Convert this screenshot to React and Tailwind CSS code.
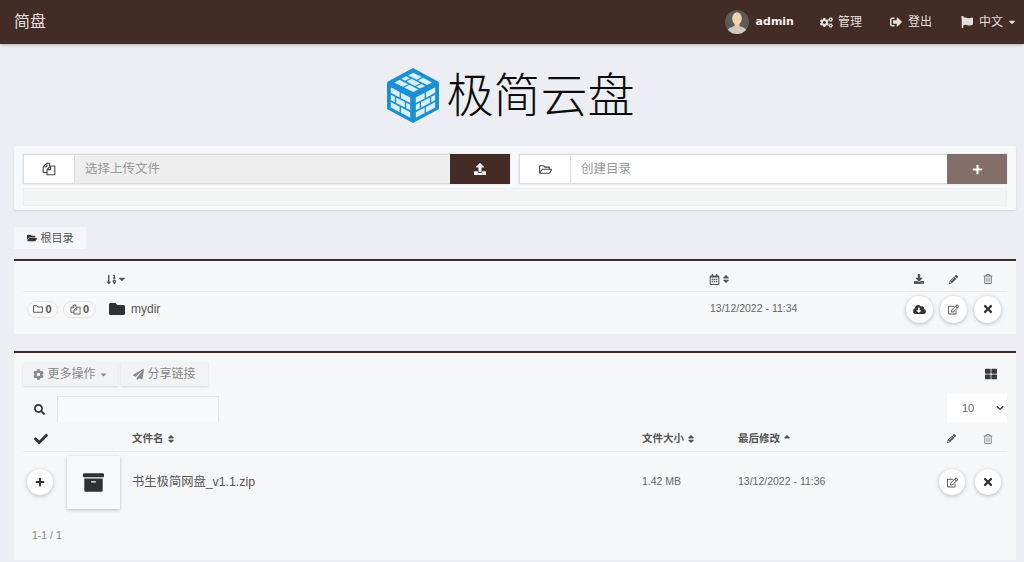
import React from "react";
import { FaCogs, FaSignOutAlt, FaFlag, FaCaretDown, FaUpload, FaRegFolderOpen, FaPlus, FaFolderOpen, FaSortNumericDown, FaRegCalendarAlt, FaSort, FaDownload, FaPencilAlt, FaRegTrashAlt, FaFolder, FaRegFolder, FaCloudDownloadAlt, FaRegEdit, FaTimes, FaCog, FaPaperPlane, FaThLarge, FaSearch, FaCheck, FaArchive, FaChevronDown, FaSortUp } from "react-icons/fa";

const cjk = "font-['Liberation_Sans','Noto_Sans_CJK_SC',sans-serif]";

function FilesIcon({ size = 14 }) {
  return (
    <svg width={size} height={size} viewBox="0 0 14 14" fill="none" stroke="currentColor" strokeWidth="1.1" strokeLinejoin="round" className="shrink-0">
      <path d="M7.5 4 V1.2 H4.8 L1.2 4.8 V10.5 H5" />
      <path d="M4.8 1.2 V4.8 H1.2" />
      <path d="M5 7.6 L8.6 4 H12.8 V12.8 H5 Z" />
      <path d="M8.6 4 V7.6 H5" />
    </svg>
  );
}

function Bricks({ transform }) {
  const rows = [
    [[0.06, 0.05, 0.4, 0.24], [0.52, 0.05, 0.42, 0.24]],
    [[0.06, 0.37, 0.18, 0.24], [0.3, 0.37, 0.4, 0.24], [0.76, 0.37, 0.18, 0.24]],
    [[0.06, 0.69, 0.4, 0.24], [0.52, 0.69, 0.42, 0.24]],
  ];
  return (
    <g transform={transform}>
      {rows.flat().map((r, i) => (
        <rect key={i} x={r[0]} y={r[1]} width={r[2]} height={r[3]} fill="#d9effa" />
      ))}
    </g>
  );
}

function Logo() {
  return (
    <svg width="54" height="57" viewBox="0 0 54 57" className="shrink-0">
      <path d="M27 1 L52 14.5 Q53 15 53 16 L53 41 Q53 42 52 42.5 L27 56 L2 42.5 Q1 42 1 41 L1 16 Q1 15 2 14.5 Z" fill="#1a8fd1" />
      <Bricks transform="matrix(22 11.5 0 23 3.5 18.5)" />
      <Bricks transform="matrix(22 -11.5 0 23 28.5 30)" />
      <Bricks transform="matrix(21.5 11 -21.5 11 27 4.5)" />
    </svg>
  );
}

function Avatar() {
  return (
    <svg width="24" height="24" viewBox="0 0 24 24" className="shrink-0">
      <defs><clipPath id="av"><circle cx="12" cy="12" r="12" /></clipPath></defs>
      <g clipPath="url(#av)">
        <rect width="24" height="24" fill="#5b5a55" />
        <ellipse cx="12" cy="22" rx="10" ry="6" fill="#cfcac2" />
        <rect x="9.5" y="12" width="5" height="6" fill="#e8c9a4" />
        <ellipse cx="12" cy="8.5" rx="4.8" ry="6.2" fill="#f0d3ae" />
      </g>
    </svg>
  );
}

function Circle({ children, className = "" }) {
  return (
    <div className={`flex h-[27px] w-[27px] items-center justify-center rounded-full bg-white text-[#333] shadow-[0_1px_4px_rgba(0,0,0,0.25)] ${className}`}>
      {children}
    </div>
  );
}

function Pill({ icon, w }) {
  return (
    <div className={`flex h-[17px] items-center justify-center gap-[2px] rounded-full border border-[#e3e3e3] bg-[#f8f8f8] text-[11px] font-bold text-[#555] ${w}`}>
      {icon}
      <span>0</span>
    </div>
  );
}

function InputGroup({ width, icon, placeholder, inputClass, btnClass, btnIcon }) {
  return (
    <div className={`flex h-[30px] ${width} shadow-[0_0_1px_rgba(0,0,0,0.25)]`}>
      <div className="flex w-[52px] shrink-0 items-center justify-center border border-[#ddd] bg-white text-[#444]">{icon}</div>
      <input readOnly placeholder={placeholder} className={`min-w-0 flex-1 border-y border-[#ddd] px-[10px] text-[12.5px] outline-none placeholder:text-[#999] ${inputClass}`} />
      <div className={`flex w-[60px] shrink-0 items-center justify-center text-white ${btnClass}`}>{btnIcon}</div>
    </div>
  );
}

export default function App() {
  return (
    <div className={`h-[562px] w-[1024px] overflow-hidden bg-[#eceef3] text-[#555] ${cjk}`}>
      <header className="flex h-[44px] items-center justify-between bg-[#432c26] pl-[14px] pr-[7px] text-[#e4dfdc] shadow-[0_1px_3px_rgba(0,0,0,0.25)]">
        <div className="text-[16px]">简盘</div>
        <nav className="flex items-center text-[12px]">
          <div className="flex items-center gap-[7px]">
            <Avatar />
            <span className="font-['DejaVu_Sans',sans-serif] text-[11px] font-bold text-[#f3f0ee]">admin</span>
          </div>
          <div className="ml-[26px] flex items-center gap-[5px]"><FaCogs className="text-[13px]" />管理</div>
          <div className="ml-[28px] flex items-center gap-[6px]"><FaSignOutAlt className="text-[12px]" />登出</div>
          <div className="ml-[29px] flex items-center gap-[6px]"><FaFlag className="text-[12px]" />中文<FaCaretDown className="-ml-[2px] text-[10px]" /></div>
        </nav>
      </header>

      <div className="flex h-[102px] items-center justify-center gap-[7px] pr-[4px]">
        <Logo />
        <div className="mb-[8px] font-['Noto_Sans_CJK_SC',sans-serif] text-[47px] font-light leading-none text-[#0c0c0c]">极简云盘</div>
      </div>

      <section className="mx-[14px] h-[64px] w-[1002px] rounded-[2px] bg-[#f6f8fa] p-[8px_9px] shadow-[0_1px_2px_rgba(0,0,0,0.1)]">
        <div className="flex gap-[9px]">
          <InputGroup width="w-[487px]" icon={<FilesIcon />} placeholder="选择上传文件" inputClass="bg-[#eeeeee]" btnClass="bg-[#432c26]" btnIcon={<FaUpload className="text-[12px]" />} />
          <InputGroup width="w-[488px]" icon={<FaRegFolderOpen className="text-[13px]" />} placeholder="创建目录" inputClass="bg-white" btnClass="bg-[#836f69]" btnIcon={<FaPlus className="text-[11px]" />} />
        </div>
        <div className="mt-[4px] h-[18px] border border-[#eeeeee] bg-[#f3f4f4]" />
      </section>

      <div className="ml-[14px] mt-[17px] flex h-[22px] w-[72px] items-center justify-center gap-[4px] bg-[#f4f6f9] text-[11px] text-[#555]">
        <FaFolderOpen className="text-[10px] text-[#333]" />根目录
      </div>

      <section className="ml-[14px] mt-[10px] h-[75px] w-[1002px] border-t-2 border-[#3a2b28] bg-[#f5f7f9] px-[9px]">
        <div className="grid h-[31px] grid-cols-[83px_603px_190px_40px_28px_41px] items-center border-b border-[#e8eaed] pt-[6px] text-[#555]">
          <div />
          <div className="flex items-center"><FaSortNumericDown className="text-[11px]" /><FaCaretDown className="text-[10px]" /></div>
          <div className="flex items-center gap-[1px]"><FaRegCalendarAlt className="text-[11px]" /><FaSort className="text-[10px]" /></div>
          <div className="flex justify-center"><FaDownload className="text-[10px]" /></div>
          <div className="flex justify-center"><FaPencilAlt className="text-[9px]" /></div>
          <div className="flex justify-center"><FaRegTrashAlt className="text-[10px] text-[#777]" /></div>
        </div>
        <div className="flex h-[42px] items-center pb-[8px]">
          <div className="ml-[4px] flex gap-[5px]">
            <Pill w="w-[31px]" icon={<FaRegFolder className="text-[10px] font-normal" />} />
            <Pill w="w-[33px]" icon={<FilesIcon size={11} />} />
          </div>
          <FaFolder className="ml-[13px] text-[16px] text-[#2f3136]" />
          <span className="ml-[6px] w-[579px] text-[12px] text-[#555]">mydir</span>
          <span className="w-[196px] text-[10.5px] text-[#666]">13/12/2022 - 11:34</span>
          <div className="flex gap-[7px]">
            <Circle><FaCloudDownloadAlt className="text-[13px]" /></Circle>
            <Circle><FaRegEdit className="text-[11px] text-[#555]" /></Circle>
            <Circle><FaTimes className="text-[12px]" /></Circle>
          </div>
        </div>
      </section>

      <section className="ml-[14px] mt-[17px] h-[209px] w-[1002px] border-t-2 border-[#3f2a26] bg-[#f5f7f9] px-[9px]">
        <div className="mt-[9px] flex h-[24px] items-center justify-between">
          <div className="flex gap-[3px] text-[12px] text-[#888]">
            <div className="flex h-[24px] w-[95px] items-center justify-center gap-[3px] bg-[#f2f3f5] shadow-[0_1px_2px_rgba(0,0,0,0.12)]">
              <FaCog className="text-[11px]" />更多操作<FaCaretDown className="text-[9px]" />
            </div>
            <div className="flex h-[24px] w-[87px] items-center justify-center gap-[3px] bg-[#f2f3f5] shadow-[0_1px_2px_rgba(0,0,0,0.12)]">
              <FaPaperPlane className="text-[11px]" />分享链接
            </div>
          </div>
          <FaThLarge className="mr-[10px] text-[12px] text-[#3a3a3a]" />
        </div>
        <div className="mt-[8px] flex h-[28px] items-start justify-between">
          <div className="flex items-center">
            <FaSearch className="ml-[11px] mt-[2px] text-[11px] text-[#333]" />
            <div className="ml-[12px] mt-[2px] h-[26px] w-[162px] border-x border-t border-[#e4e4e4] bg-[#f8f9fb]" />
          </div>
          <div className="flex h-[28px] w-[60px] items-center justify-between bg-white pl-[15px] pr-[3px] text-[11px] text-[#666]">
            10<FaChevronDown className="text-[8px] text-[#333]" />
          </div>
        </div>
        <div className="grid h-[30px] grid-cols-[44px_65px_510px_96px_188px_50px_24px] items-center border-b border-[#e8eaed] pt-[4px] text-[10.5px] font-bold text-[#555]">
          <div className="flex justify-center pr-[8px]"><FaCheck className="text-[14px] text-[#333]" /></div>
          <div />
          <div className="flex items-center gap-[2px]">文件名<FaSort className="text-[10px]" /></div>
          <div className="flex items-center gap-[2px]">文件大小<FaSort className="text-[10px]" /></div>
          <div className="flex items-center gap-[2px]">最后修改<FaSortUp className="text-[10px]" /></div>
          <div className="flex justify-center"><FaPencilAlt className="text-[9px] text-[#555]" /></div>
          <div className="flex justify-center"><FaRegTrashAlt className="text-[10px] font-normal text-[#888]" /></div>
        </div>
        <div className="grid h-[60px] grid-cols-[44px_65px_510px_96px_201px_36px_32px] items-center">
          <div className="pl-[4px]"><Circle className="!h-[26px] !w-[26px]"><FaPlus className="text-[10px]" /></Circle></div>
          <div>
            <div className="flex h-[53px] w-[53px] items-center justify-center bg-[#f7f8fa] shadow-[0_1px_3px_rgba(0,0,0,0.25)]">
              <FaArchive className="text-[21px] text-[#2f3136]" />
            </div>
          </div>
          <div className="text-[12.3px] text-[#555]">书生极简网盘_v1.1.zip</div>
          <div className="text-[10.5px] text-[#666]">1.42 MB</div>
          <div className="text-[10.5px] text-[#666]">13/12/2022 - 11:36</div>
          <Circle className="!h-[26px] !w-[26px]"><FaRegEdit className="text-[11px] text-[#555]" /></Circle>
          <Circle className="!h-[26px] !w-[26px]"><FaTimes className="text-[12px]" /></Circle>
        </div>
        <div className="mt-[16px] pl-[9px] text-[10.5px] text-[#888]">1-1 / 1</div>
      </section>
    </div>
  );
}
